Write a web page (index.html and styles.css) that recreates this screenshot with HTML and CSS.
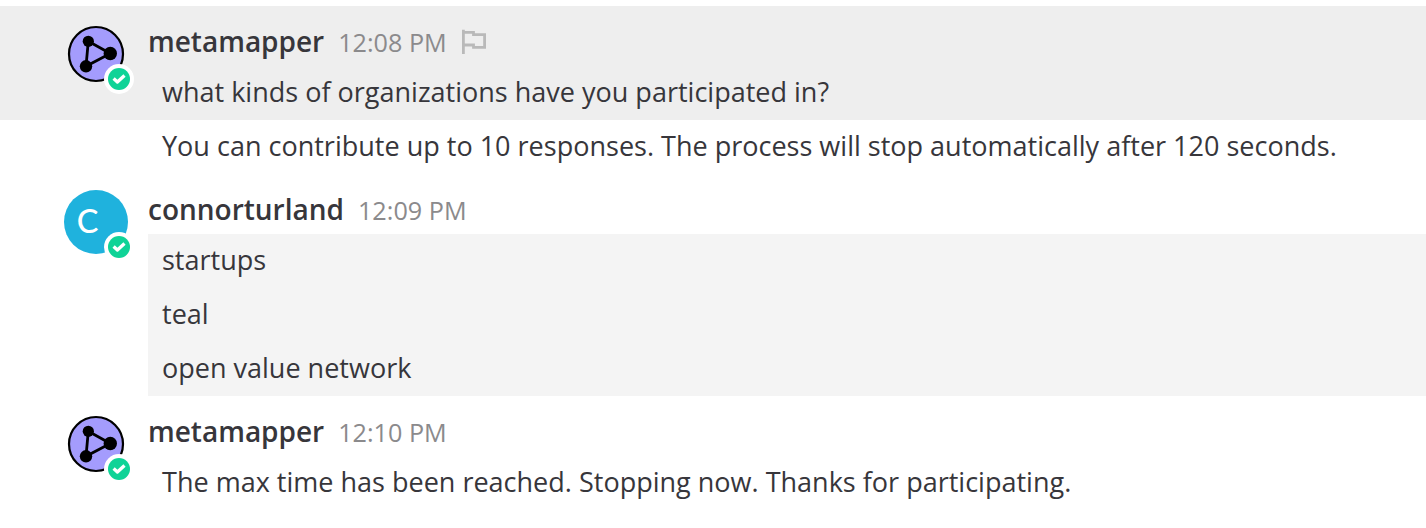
FILE: index.html
```html
<!DOCTYPE html>
<html lang="en">
<head>
<meta charset="utf-8">
<title>Conversation</title>
<link rel="stylesheet" href="styles.css">
</head>
<body>
<svg class="defs" width="0" height="0">
  <symbol id="graph" viewBox="0 0 64 64">
    <circle cx="32" cy="32" r="27" fill="#a49cfd" stroke="#000" stroke-width="2.200"/>
    <path d="M24.300 19.300L46.300 31.500L22 44.300Z" fill="none" stroke="#000" stroke-width="2.800"/>
    <circle cx="24.300" cy="19.300" r="5.600"/><circle cx="46.300" cy="31.500" r="6.700"/><circle cx="22" cy="44.300" r="6.200"/>
  </symbol>
  <symbol id="online" viewBox="0 0 30 30">
    <circle cx="15" cy="15" r="15" fill="#fff"/><circle cx="15" cy="15" r="11" fill="#0fd397"/>
    <path d="M9.600 14.500L13.400 18L20.500 11.500" fill="none" stroke="#fff" stroke-width="3.300" stroke-linejoin="round"/>
  </symbol>
</svg>
<main class="thread">
  <article class="post post--hover">
    <div class="avatar"><svg class="picture"><use href="#graph"/></svg><svg class="status"><use href="#online"/></svg></div>
    <div class="content">
      <header class="meta"><span class="name">metamapper</span><time class="time">12:08 PM</time>
        <svg class="flag" viewBox="0 0 26 26"><path d="M2.400 0.700V25M2.400 3.300H12.500V5.700H23.600V18.300H12.500V16H2.400" fill="none" stroke="#b9b9b9" stroke-width="2.800"/></svg></header>
      <p class="line">what kinds of organizations have you participated in?</p>
    </div>
  </article>
  <p class="line line--follow">You can contribute up to 10 responses. The process will stop automatically after 120 seconds.</p>
  <article class="post">
    <div class="avatar"><div class="initial">C</div><svg class="status"><use href="#online"/></svg></div>
    <div class="content">
      <header class="meta"><span class="name">connorturland</span><time class="time">12:09 PM</time></header>
      <div class="answers"><p class="line">startups</p><p class="line">teal</p><p class="line">open value network</p></div>
    </div>
  </article>
  <article class="post">
    <div class="avatar"><svg class="picture"><use href="#graph"/></svg><svg class="status"><use href="#online"/></svg></div>
    <div class="content">
      <header class="meta"><span class="name">metamapper</span><time class="time">12:10 PM</time></header>
      <p class="line">The max time has been reached. Stopping now. Thanks for participating.</p>
    </div>
  </article>
</main>
</body>
</html>
```
FILE: styles.css
```css
body { margin: 0; background: #fff; color: #37363b; font-family: "Open Sans", sans-serif; font-size: 27.02px; overflow: hidden; }
.defs { position: absolute; }
.thread { padding-top: 6px; }
.post { display: flex; padding: 16px 0 0 64px; }
.post--hover { background: #eeeeee; }
.avatar { position: relative; width: 64px; height: 64px; margin-right: 20px; flex: none; }
.picture { display: block; width: 64px; height: 64px; }
.initial { width: 64px; height: 64px; box-sizing: border-box; padding-right: 17px; border-radius: 50%; background: #1fb2dd; color: #fff; font-family: Lato, sans-serif; font-size: 32.5px; font-weight: 500; line-height: 61px; text-align: center; }
.status { position: absolute; left: 40px; top: 42px; width: 30px; height: 30px; }
.content { flex: 1; }
.meta { display: flex; align-items: center; box-sizing: border-box; height: 44px; padding-bottom: 4px; line-height: 40px; }
.name { font-size: 28px; font-weight: 600; line-height: 38px; padding-bottom: 2px; }
.time { margin-left: 14px; color: #8b8a8c; font-size: 25.2px; }
.flag { width: 26px; height: 26px; margin-left: 14px; }
.line { margin: 0; height: 54px; padding-left: 14px; line-height: 52px; white-space: nowrap; }
.line--follow { margin-left: 148px; }
.answers { background: #f4f4f4; }
```
